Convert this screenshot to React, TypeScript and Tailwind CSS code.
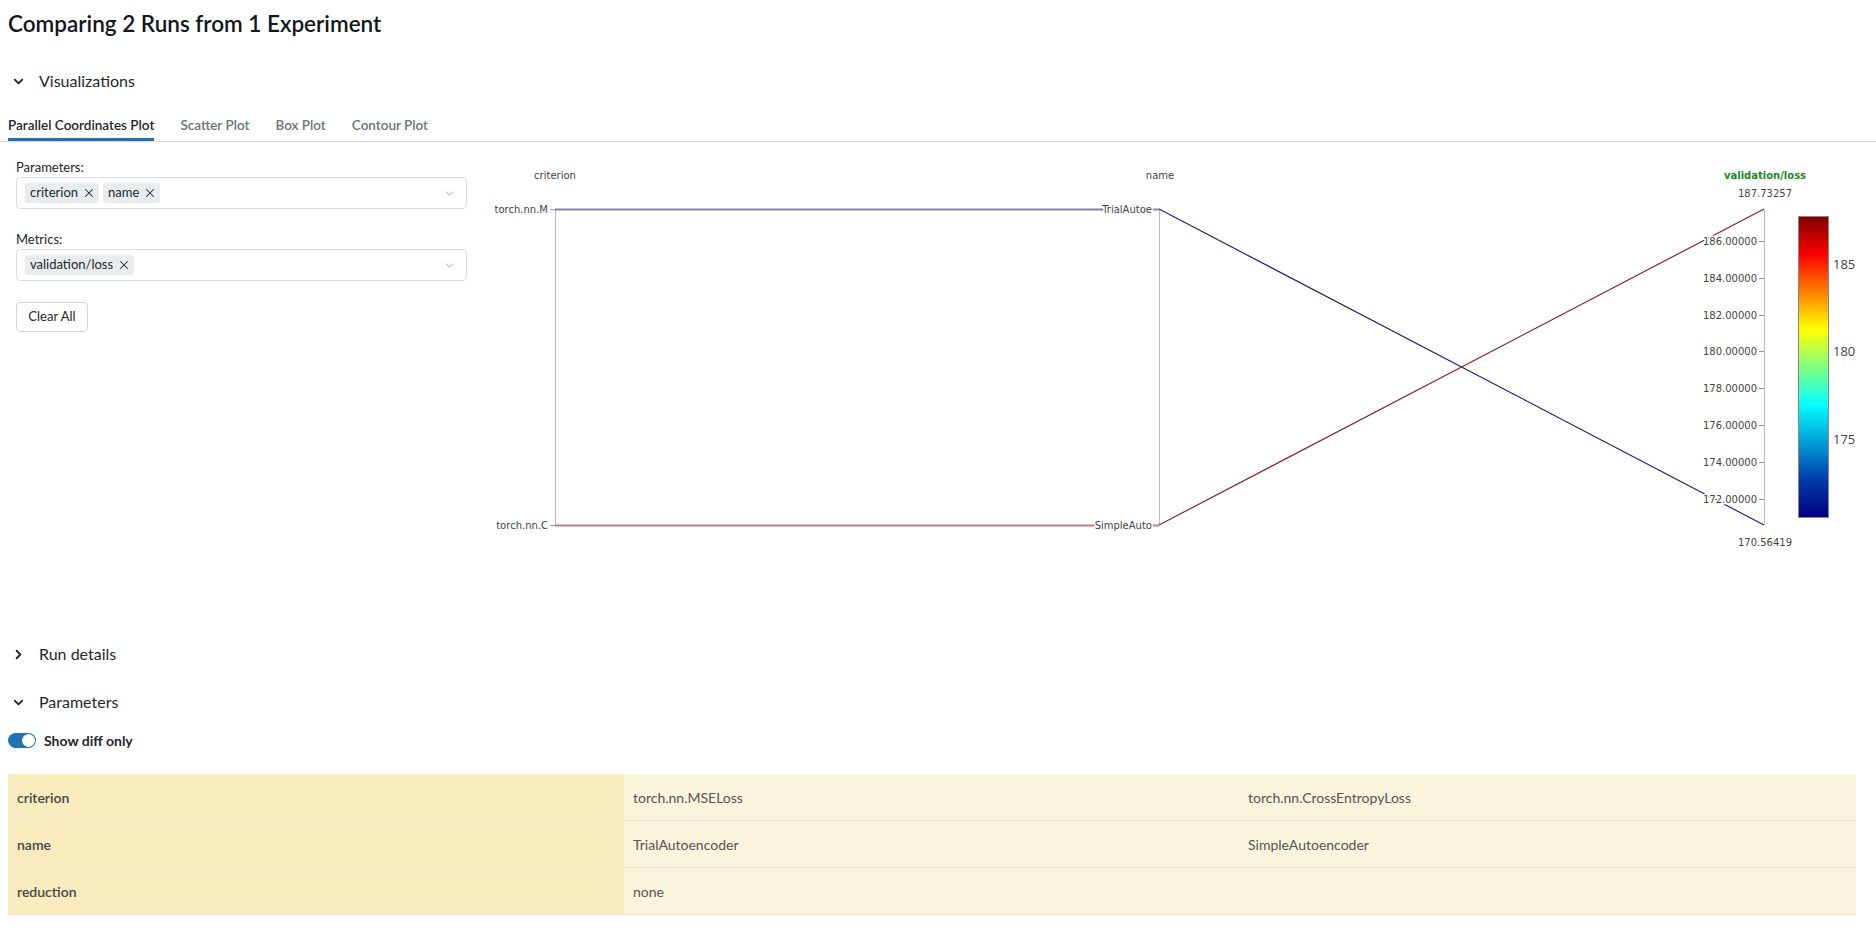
import React from 'react';
import { ChevronDown, ChevronRight, X } from 'lucide-react';

const UI_FONT = "font-['Lato',sans-serif]";

// parallel coordinates geometry (svg origin sits at page x=480, y=142)
const AX_CRIT = 75;
const AX_NAME = 679;
const AX_LOSS = 1284;
const TOP = 67;
const BOTTOM = 383;
const VMAX = 187.73257;
const VMIN = 170.56419;

function yFor(v: number) {
  return TOP + ((VMAX - v) * (BOTTOM - TOP)) / (VMAX - VMIN);
}

const ticks = [186, 184, 182, 180, 178, 176, 174, 172];

function Chip({ label }: { label: string }) {
  return (
    <span className="flex items-center gap-[4px] h-[20px] pl-[5px] pr-[3px] rounded-[3px] bg-[#e9ecef] text-[13px] text-[#1f272d]">
      {label}
      <X size={14} strokeWidth={1.8} className="text-[#2b2b2b]" />
    </span>
  );
}

function MultiSelect({ values }: { values: string[] }) {
  return (
    <div className="flex items-center justify-between w-[451px] h-[32px] pl-[8px] pr-[10px] border border-[#d9dde1] rounded-[4px] bg-white">
      <div className="flex items-center gap-[4px]">
        {values.map((v) => (
          <Chip key={v} label={v} />
        ))}
      </div>
      <ChevronDown size={13} strokeWidth={1.6} className="text-[#8a8f94]" />
    </div>
  );
}

function SectionHeader({ title, open }: { title: string; open: boolean }) {
  return (
    <div className="flex items-center h-[36px] pl-[11px] gap-[13px] text-[16px] text-[#1f272d]">
      {open ? (
        <ChevronDown size={15} strokeWidth={3} />
      ) : (
        <ChevronRight size={15} strokeWidth={3} />
      )}
      <span>{title}</span>
    </div>
  );
}

function ParallelPlot() {
  const halo = { paintOrder: 'stroke' as const, stroke: 'white', strokeWidth: 3, strokeLinejoin: 'round' as const };
  return (
    <svg width={1396} height={480} className="block">
      <defs>
        <linearGradient id="jet" x1="0" y1="1" x2="0" y2="0">
          <stop offset="0" stopColor="rgb(0,0,131)" />
          <stop offset="0.125" stopColor="rgb(0,60,170)" />
          <stop offset="0.375" stopColor="rgb(5,255,255)" />
          <stop offset="0.625" stopColor="rgb(255,255,0)" />
          <stop offset="0.875" stopColor="rgb(250,0,0)" />
          <stop offset="1" stopColor="rgb(128,0,0)" />
        </linearGradient>
      </defs>

      {/* axes */}
      <line x1={AX_CRIT + 0.5} y1={TOP} x2={AX_CRIT + 0.5} y2={BOTTOM} stroke="#bdbdbd" />
      <line x1={AX_NAME + 0.5} y1={TOP} x2={AX_NAME + 0.5} y2={BOTTOM} stroke="#bdbdbd" />
      <line x1={AX_LOSS + 0.5} y1={TOP} x2={AX_LOSS + 0.5} y2={BOTTOM} stroke="#bdbdbd" />

      {/* run lines */}
      <line x1={AX_CRIT} y1={TOP + 0.5} x2={AX_NAME} y2={TOP + 0.5} stroke="#7f81aa" strokeWidth={2} />
      <line x1={AX_CRIT} y1={BOTTOM + 0.5} x2={AX_NAME} y2={BOTTOM + 0.5} stroke="#b77f87" strokeWidth={2} />
      <line x1={AX_NAME} y1={TOP} x2={AX_LOSS} y2={BOTTOM} stroke="#23237a" strokeWidth={1.2} />
      <line x1={AX_NAME} y1={BOTTOM} x2={AX_LOSS} y2={TOP} stroke="#822727" strokeWidth={1.2} />

      {/* axis titles */}
      <g fontFamily="'DejaVu Sans', sans-serif" fontSize={10} fill="#444" textAnchor="middle">
        <text x={AX_CRIT} y={37}>criterion</text>
        <text x={AX_NAME + 1} y={37}>name</text>
        <text x={AX_LOSS + 1} y={37} fill="#1a8a1a" fontWeight="bold">validation/loss</text>
        <text x={AX_LOSS + 1} y={55}>187.73257</text>
        <text x={AX_LOSS + 1} y={404}>170.56419</text>
      </g>

      {/* category ticks */}
      <g stroke="#999">
        <line x1={AX_CRIT - 5} y1={TOP + 0.5} x2={AX_CRIT} y2={TOP + 0.5} />
        <line x1={AX_CRIT - 5} y1={BOTTOM + 0.5} x2={AX_CRIT} y2={BOTTOM + 0.5} />
        <line x1={AX_NAME - 5} y1={TOP + 0.5} x2={AX_NAME} y2={TOP + 0.5} />
        <line x1={AX_NAME - 5} y1={BOTTOM + 0.5} x2={AX_NAME} y2={BOTTOM + 0.5} />
        {ticks.map((t) => (
          <line key={t} x1={AX_LOSS - 5} y1={Math.round(yFor(t)) + 0.5} x2={AX_LOSS} y2={Math.round(yFor(t)) + 0.5} />
        ))}
      </g>
      <g fontFamily="'DejaVu Sans', sans-serif" fontSize={10} fill="#444" textAnchor="end" style={halo}>
        <text x={AX_CRIT - 7} y={TOP + 4}>torch.nn.M</text>
        <text x={AX_CRIT - 7} y={BOTTOM + 4}>torch.nn.C</text>
        <text x={AX_NAME - 7} y={TOP + 4}>TrialAutoe</text>
        <text x={AX_NAME - 7} y={BOTTOM + 4}>SimpleAuto</text>
        {ticks.map((t) => (
          <text key={t} x={AX_LOSS - 7} y={yFor(t) + 4}>
            {t.toFixed(5)}
          </text>
        ))}
      </g>

      {/* colorbar */}
      <rect x={1318.5} y={74.5} width={30} height={301} fill="url(#jet)" stroke="#8a8585" />
      <g fontFamily="'Open Sans', sans-serif" fontSize={13} fill="#444">
        <text x={1353} y={127}>185</text>
        <text x={1353} y={214}>180</text>
        <text x={1353} y={302}>175</text>
      </g>
    </svg>
  );
}

const rows = [
  { key: 'criterion', a: 'torch.nn.MSELoss', b: 'torch.nn.CrossEntropyLoss' },
  { key: 'name', a: 'TrialAutoencoder', b: 'SimpleAutoencoder' },
  { key: 'reduction', a: 'none', b: '' },
];

export default function App() {
  return (
    <div className={`min-h-screen bg-white text-[#1f272d] ${UI_FONT}`}>
      <h1 className="h-[48px] flex items-center pl-[8px] text-[22.5px] font-semibold text-[#11171c]">
        Comparing 2 Runs from 1 Experiment
      </h1>

      <div className="mt-[15px]">
        <SectionHeader title="Visualizations" open />
      </div>

      <div className="flex gap-[26px] pl-[8px] border-b border-[#d4d8dc]">
        <div className="pt-[16px] pb-[3px] border-b-[3px] border-[#2272b4] text-[13.5px] font-semibold text-[#1f272d] leading-[20px]">
          Parallel Coordinates Plot
        </div>
        {['Scatter Plot', 'Box Plot', 'Contour Plot'].map((t) => (
          <div key={t} className="pt-[16px] pb-[3px] border-b-[3px] border-transparent text-[13.5px] font-semibold text-[#6b747c] leading-[20px]">
            {t}
          </div>
        ))}
      </div>

      <div className="flex">
        <div className="w-[480px] pl-[16px] pt-[16px]">
          <div className="text-[13px] leading-[19px]">Parameters:</div>
          <MultiSelect values={['criterion', 'name']} />
          <div className="mt-[21px] text-[13px] leading-[19px]">Metrics:</div>
          <MultiSelect values={['validation/loss']} />
          <button className="mt-[21px] h-[30px] w-[72px] border border-[#d1d5da] rounded-[4px] text-[13px] bg-white">
            Clear All
          </button>
        </div>
        <ParallelPlot />
      </div>

      <div className="mt-[14px]">
        <SectionHeader title="Run details" open={false} />
      </div>
      <div className="mt-[12px]">
        <SectionHeader title="Parameters" open />
      </div>

      <div className="mt-[10px] flex items-center h-[20px] pl-[8px] gap-[8px]">
        <div className="flex items-center justify-end w-[28px] h-[15px] rounded-full bg-[#2272b4] p-[1px]">
          <div className="w-[13px] h-[13px] rounded-full bg-white" />
        </div>
        <span className="text-[14px] font-bold">Show diff only</span>
      </div>

      <div className="mt-[24px] ml-[8px] w-[1848px] text-[14px]">
        {rows.map((r) => (
          <div key={r.key} className="grid grid-cols-3 h-[47px] border-b border-[#efe7cb]">
            <div className="flex items-center pl-[9px] bg-[#f8ebbe] font-semibold text-[#474747]">{r.key}</div>
            <div className="flex items-center pl-[9px] bg-[#faf4dc] text-[#555]">{r.a}</div>
            <div className="flex items-center pl-[8px] bg-[#faf4dc] text-[#555]">{r.b}</div>
          </div>
        ))}
      </div>
    </div>
  );
}
